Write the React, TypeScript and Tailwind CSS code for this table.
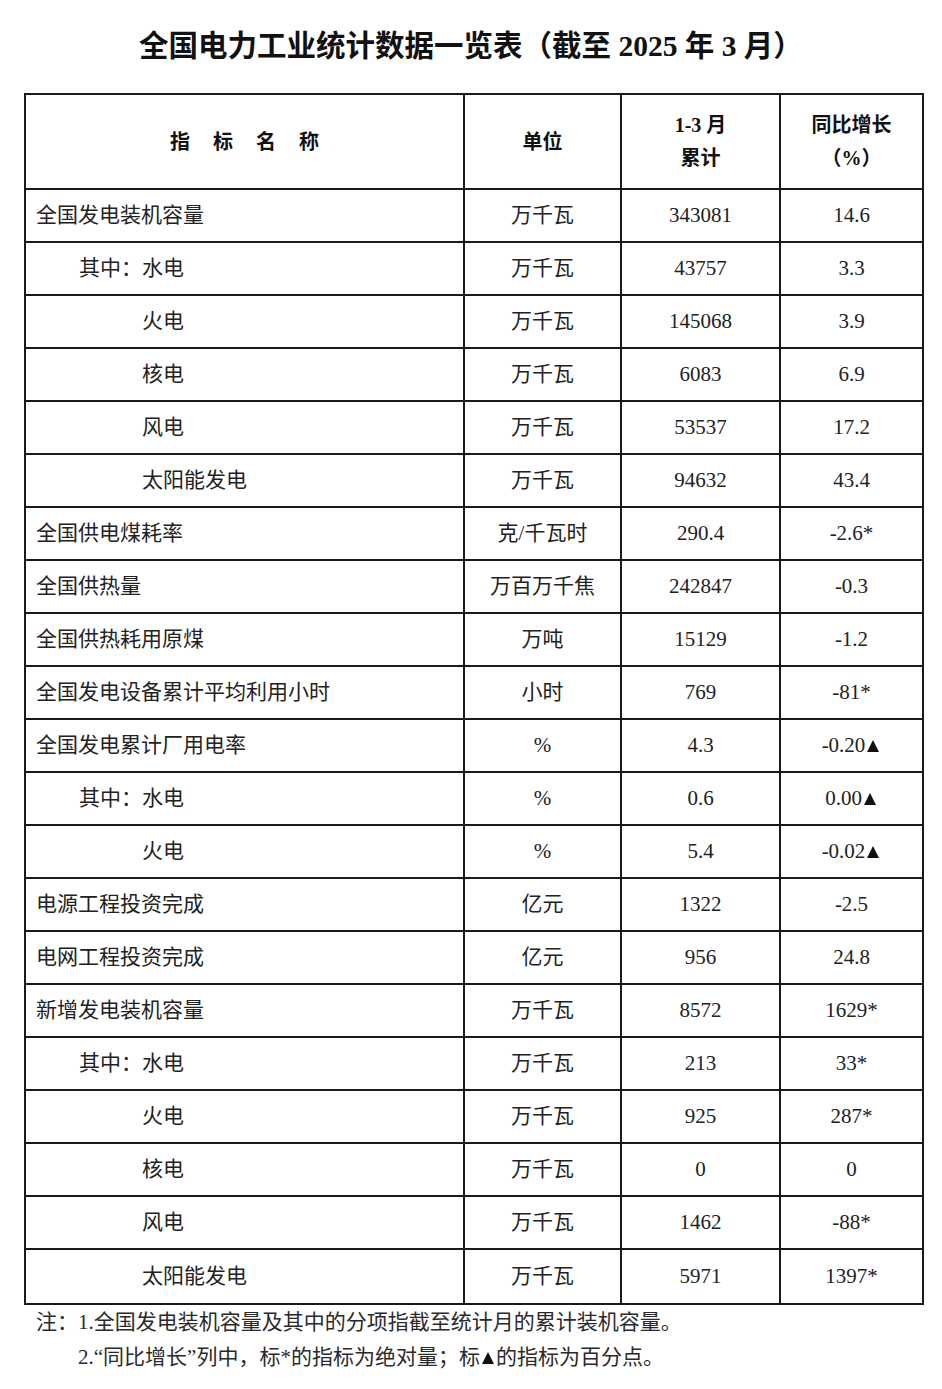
type Row = { name: string; level: 0 | 1 | 2; unit: string; total: string; yoy: string };

const rows: Row[] = [
  { name: '全国发电装机容量', level: 0, unit: '万千瓦', total: '343081', yoy: '14.6' },
  { name: '其中：水电', level: 1, unit: '万千瓦', total: '43757', yoy: '3.3' },
  { name: '火电', level: 2, unit: '万千瓦', total: '145068', yoy: '3.9' },
  { name: '核电', level: 2, unit: '万千瓦', total: '6083', yoy: '6.9' },
  { name: '风电', level: 2, unit: '万千瓦', total: '53537', yoy: '17.2' },
  { name: '太阳能发电', level: 2, unit: '万千瓦', total: '94632', yoy: '43.4' },
  { name: '全国供电煤耗率', level: 0, unit: '克/千瓦时', total: '290.4', yoy: '-2.6*' },
  { name: '全国供热量', level: 0, unit: '万百万千焦', total: '242847', yoy: '-0.3' },
  { name: '全国供热耗用原煤', level: 0, unit: '万吨', total: '15129', yoy: '-1.2' },
  { name: '全国发电设备累计平均利用小时', level: 0, unit: '小时', total: '769', yoy: '-81*' },
  { name: '全国发电累计厂用电率', level: 0, unit: '%', total: '4.3', yoy: '-0.20▲' },
  { name: '其中：水电', level: 1, unit: '%', total: '0.6', yoy: '0.00▲' },
  { name: '火电', level: 2, unit: '%', total: '5.4', yoy: '-0.02▲' },
  { name: '电源工程投资完成', level: 0, unit: '亿元', total: '1322', yoy: '-2.5' },
  { name: '电网工程投资完成', level: 0, unit: '亿元', total: '956', yoy: '24.8' },
  { name: '新增发电装机容量', level: 0, unit: '万千瓦', total: '8572', yoy: '1629*' },
  { name: '其中：水电', level: 1, unit: '万千瓦', total: '213', yoy: '33*' },
  { name: '火电', level: 2, unit: '万千瓦', total: '925', yoy: '287*' },
  { name: '核电', level: 2, unit: '万千瓦', total: '0', yoy: '0' },
  { name: '风电', level: 2, unit: '万千瓦', total: '1462', yoy: '-88*' },
  { name: '太阳能发电', level: 2, unit: '万千瓦', total: '5971', yoy: '1397*' },
];

const indent = { 0: 'pl-[10px]', 1: 'pl-[53px]', 2: 'pl-[116px]' };

// 实心三角（百分点标记）
function Tri() {
  return (
    <svg viewBox="0 0 12 12" className="inline-block w-[12px] h-[12px] mx-[2px] align-baseline" aria-hidden>
      <polygon points="6,0 12,12 0,12" fill="#111" />
    </svg>
  );
}

function Yoy({ value }: { value: string }) {
  if (!value.endsWith('▲')) return <>{value}</>;
  return (
    <span>
      {value.slice(0, -1)}
      <Tri />
    </span>
  );
}

export default function App() {
  return (
    <div className="w-[942px] h-[1389px] bg-white text-[#222] font-['Liberation_Serif','Noto_Sans_CJK_SC',serif]">
      <div className="h-[93px] flex items-center justify-center">
        <h1 className="text-[29.5px] font-bold text-[#111]">全国电力工业统计数据一览表（截至 2025 年 3 月）</h1>
      </div>

      <div className="ml-[24px] w-[900px] border-2 border-[#1a1a1a]">
        <div className="h-[95px] grid grid-cols-[439px_157px_159px_141px] border-b-2 border-[#1a1a1a] font-bold text-[20px] text-[#111]">
          <div className="flex items-center justify-center gap-[23px] border-r-2 border-[#1a1a1a]">
            <span>指</span>
            <span>标</span>
            <span>名</span>
            <span>称</span>
          </div>
          <div className="flex items-center justify-center border-r-2 border-[#1a1a1a]">单位</div>
          <div className="flex flex-col items-center justify-center leading-[33px] border-r-2 border-[#1a1a1a]">
            <span>1-3 月</span>
            <span>累计</span>
          </div>
          <div className="flex flex-col items-center justify-center leading-[33px]">
            <span>同比增长</span>
            <span>（%）</span>
          </div>
        </div>

        {rows.map((r, i) => (
          <div
            key={i}
            className={
              'h-[53px] grid grid-cols-[439px_157px_159px_141px] text-[21px] ' +
              (i < rows.length - 1 ? 'border-b-2 border-[#1a1a1a]' : '')
            }
          >
            <div className={'flex items-center border-r-2 border-[#1a1a1a] ' + indent[r.level]}>{r.name}</div>
            <div className="flex items-center justify-center border-r-2 border-[#1a1a1a]">{r.unit}</div>
            <div className="flex items-center justify-center border-r-2 border-[#1a1a1a]">{r.total}</div>
            <div className="flex items-center justify-center">
              <Yoy value={r.yoy} />
            </div>
          </div>
        ))}
      </div>

      <div className="pl-[36px] text-[21px] leading-[35px] text-[#2a2a2a] flex">
        <span>注：</span>
        <div className="flex flex-col">
          <span>1.全国发电装机容量及其中的分项指截至统计月的累计装机容量。</span>
          <span>
            2.“同比增长”列中，标*的指标为绝对量；标
            <Tri />
            的指标为百分点。
          </span>
        </div>
      </div>
    </div>
  );
}
